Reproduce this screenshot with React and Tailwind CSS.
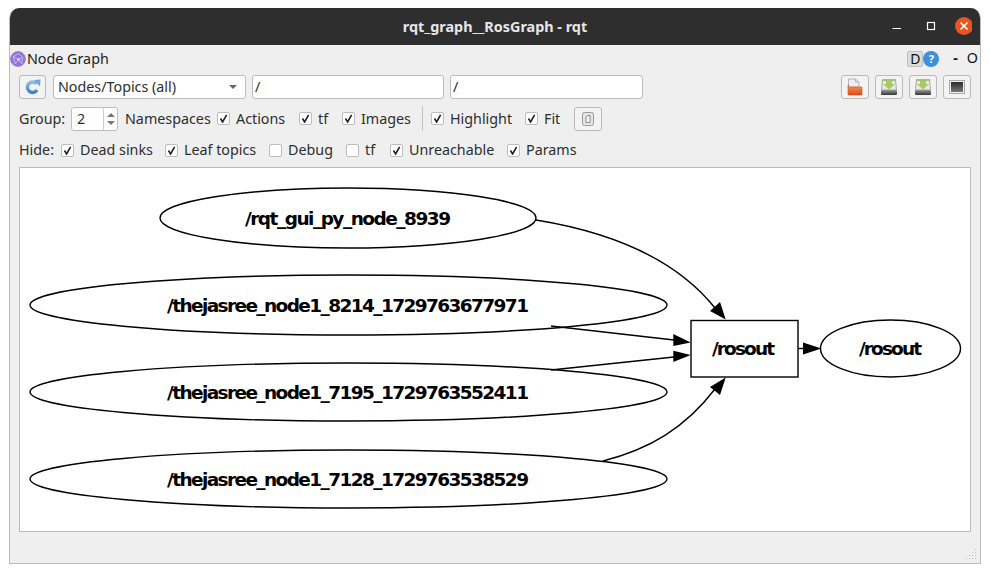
import React from "react";

const inputBox = "h-[24px] bg-white border border-[#bdbdbd] rounded-[3px]";
const toolBtn = "h-[24px] flex items-center justify-center bg-[#f3f3f3] border border-[#bababa] rounded-[3px]";

function Check({ label, checked = true, className = "" }) {
  return (
    <div className={`flex items-center shrink-0 ${className}`}>
      <span className="w-[13px] h-[13px] bg-white border border-[#bdbdbd] rounded-[2px] flex items-center justify-center shrink-0">
        {checked && (
          <svg width="9" height="9" viewBox="0 0 9 9">
            <path d="M1.5 4.5 L3.6 8 L7.6 0.8" fill="none" stroke="#222" strokeWidth="1.6" />
          </svg>
        )}
      </span>
      <span className="ml-[6px]">{label}</span>
    </div>
  );
}

function RefreshIcon() {
  return (
    <svg width="18" height="18" viewBox="0 0 18 18">
      <defs>
        <linearGradient id="refreshFill" x1="0" y1="0" x2="0" y2="1">
          <stop offset="0" stopColor="#8fbbe6" />
          <stop offset="1" stopColor="#3f83c9" />
        </linearGradient>
      </defs>
      <path d="M12.5 5.8 A5.2 5.2 0 1 0 13 12" fill="none" stroke="url(#refreshFill)" strokeWidth="3.4" />
      <path d="M10 2 L16.5 1.5 L16 8.5 Z" fill="#6fa5dc" />
    </svg>
  );
}

function FolderIcon() {
  return (
    <svg width="18" height="18" viewBox="0 0 18 18">
      <defs>
        <linearGradient id="folderFill" x1="0" y1="0" x2="0" y2="1">
          <stop offset="0" stopColor="#f79a68" />
          <stop offset="1" stopColor="#dd4a14" />
        </linearGradient>
      </defs>
      <path d="M2.5 1 H9.5 L13 4 V9 H2.5 Z" fill="#efefef" stroke="#b5b5b5" />
      <path d="M9.5 1 V4 H13" fill="#dddddd" stroke="#b5b5b5" />
      <path d="M2 7 H2.5 V9 H16 V17 H2 Z" fill="url(#folderFill)" stroke="#c9552a" strokeWidth="0.6" />
    </svg>
  );
}

function DriveIcon() {
  return (
    <svg width="18" height="18" viewBox="0 0 18 18">
      <defs>
        <linearGradient id="driveFill" x1="0" y1="0" x2="0" y2="1">
          <stop offset="0" stopColor="#9a9a9a" />
          <stop offset="1" stopColor="#333" />
        </linearGradient>
      </defs>
      <path d="M2.5 2 H15.5 L16.5 12 H1.5 Z" fill="#e9ebe3" stroke="#a8ab9f" />
      <rect x="1" y="12" width="16" height="5" rx="1" fill="url(#driveFill)" />
      <path d="M2 2 H16" stroke="#9dbb5c" strokeWidth="1.4" />
      <path d="M6 3 H12 V6 H15 L9 11.5 L3 6 H6 Z" fill="#a9c968" />
    </svg>
  );
}

function ScreenIcon() {
  return (
    <svg width="18" height="18" viewBox="0 0 18 18">
      <defs>
        <linearGradient id="screenFill" x1="0" y1="0" x2="0" y2="1">
          <stop offset="0" stopColor="#2b2b2b" />
          <stop offset="1" stopColor="#777" />
        </linearGradient>
      </defs>
      <rect x="1.5" y="2.5" width="15" height="13" fill="#efefef" stroke="#a9a9a9" />
      <rect x="3" y="4" width="12" height="10" fill="url(#screenFill)" />
    </svg>
  );
}

function FitIcon() {
  return (
    <svg width="16" height="16" viewBox="0 0 16 16">
      <rect x="2.5" y="1.5" width="11" height="13" rx="2" fill="#e4e4e4" stroke="#9a9a9a" />
      <path d="M6 6 L8 4.5 H10 V11.5 H6 Z" fill="#f7f7f7" stroke="#8a8a8a" />
    </svg>
  );
}

function GraphIcon() {
  return (
    <svg width="16" height="16" viewBox="0 0 15 15" className="shrink-0">
      <circle cx="7.5" cy="7.5" r="7" fill="#9272dc" stroke="#8d8d9c" strokeWidth="0.8" />
      <path d="M3 5 L8 2.5 L12 6 L8 8 L3 5 M8 8 L5 12 M8 8 L11 12 M3 5 L5 12 M12 6 L11 12" fill="none" stroke="#cfc0f2" strokeWidth="0.8" />
      <circle cx="8" cy="8" r="1.2" fill="#e6def9" />
    </svg>
  );
}

// graph is drawn in page coordinates, the viewBox is the canvas rect
function Graph() {
  const label = (x, y, len, text) => (
    <text x={x} y={y} textLength={len} fontSize="18.5" fontWeight="700" fill="#000" className="font-['DejaVu_Sans',sans-serif]">
      {text}
    </text>
  );
  return (
    <svg width="950" height="363" viewBox="20 168 950 363" className="block">
      <g fill="none" stroke="#000" strokeWidth="1.4">
        <ellipse cx="348" cy="218" rx="188" ry="30" />
        <ellipse cx="348.5" cy="305" rx="318.5" ry="30" />
        <ellipse cx="348.5" cy="392" rx="318.5" ry="29" />
        <ellipse cx="348.5" cy="479" rx="318.5" ry="29" />
        <rect x="691" y="320.5" width="107" height="56.5" />
        <ellipse cx="890.5" cy="348.5" rx="70" ry="28.5" />
        <path d="M536 220 C610 232 675 258 715 308" />
        <path d="M551 326 L674 340" />
        <path d="M551 370 L674 357" />
        <path d="M603 461 C650 449 685 428 715 389" />
        <path d="M798 348.5 H804" />
      </g>
      <g fill="#000">
        <path d="M725.7 319.5 L710 311 L720 302 Z" />
        <path d="M690.7 342.5 L673.3 334 L673.3 346 Z" />
        <path d="M690.7 355 L673.3 350.7 L673.3 362 Z" />
        <path d="M725.7 377.5 L710 387 L720 395 Z" />
        <path d="M821.5 348.5 L803 342.5 L803 354.5 Z" />
      </g>
      {label(245, 225, 206, "/rqt_gui_py_node_8939")}
      {label(167, 312, 362, "/thejasree_node1_8214_1729763677971")}
      {label(167, 399, 362, "/thejasree_node1_7195_1729763552411")}
      {label(167, 486, 362, "/thejasree_node1_7128_1729763538529")}
      {label(712, 355, 63, "/rosout")}
      {label(859, 355, 63, "/rosout")}
    </svg>
  );
}

export default function App() {
  return (
    <div className="w-[990px] h-[573px] bg-white pt-[8px] pl-[9px] overflow-hidden font-['Noto_Sans',sans-serif] text-[14.3px] text-[#2e2e2e]">
      <div className="w-[972px] h-[556px] flex flex-col bg-[#efefef] border-x border-b border-[#bcbcbc] rounded-t-[10px] overflow-hidden">
        {/* title bar */}
        <div className="h-[37px] shrink-0 bg-[#2f2e2e] flex items-center -mx-px relative">
          <div className="w-full text-center text-[14.4px] font-bold text-[#e6e6e6]">rqt_graph__RosGraph - rqt</div>
          <div className="absolute right-[9px] top-[8px] flex items-center">
            <svg width="80" height="20" viewBox="0 0 80 20">
              <path d="M0.5 12.5 H9" stroke="#fff" strokeWidth="1" />
              <rect x="35.5" y="6.5" width="7" height="7" fill="none" stroke="#fff" strokeWidth="1.2" />
              <circle cx="72" cy="10" r="9" fill="#e95420" />
              <path d="M68.5 6.5 L75.5 13.5 M75.5 6.5 L68.5 13.5" stroke="#fff" strokeWidth="1.6" />
            </svg>
          </div>
        </div>

        {/* dock title */}
        <div className="h-[23px] shrink-0 flex items-center justify-between pr-[2px] pt-[4px]">
          <div className="flex items-center text-[#222]">
            <GraphIcon />
            <span className="ml-[1px]">Node Graph</span>
          </div>
          <div className="flex items-center">
            <span className="w-[16px] h-[16px] bg-[#dcdcdc] border border-[#c0c0c0] rounded-[2px] flex items-center justify-center text-[14px] leading-none text-[#111]">D</span>
            <span className="w-[16px] h-[16px] rounded-full bg-[#3f8fdc] text-white text-[11px] font-bold leading-none flex items-center justify-center">?</span>
            <span className="ml-[14px] font-bold text-[#111] leading-none">-</span>
            <span className="ml-[9px] text-[#111] leading-none">O</span>
          </div>
        </div>

        {/* toolbar */}
        <div className="h-[24px] mt-[7px] shrink-0 flex items-center pl-[9px] pr-[9px]">
          <div className={`${toolBtn} w-[27px]`}><RefreshIcon /></div>
          <div className={`${inputBox} w-[193px] ml-[7px] bg-[#f3f3f3] flex items-center justify-between pl-[4px] pr-[8px]`}>
            <span>Nodes/Topics (all)</span>
            <span className="w-0 h-0 border-x-[4px] border-x-transparent border-t-[4px] border-t-[#666]" />
          </div>
          <div className={`${inputBox} w-[192px] ml-[6px] pl-[2px] flex items-center`}>/</div>
          <div className={`${inputBox} w-[193px] ml-[6px] pl-[2px] flex items-center`}>/</div>
          <div className="ml-auto flex items-center gap-[6px]">
            <div className={`${toolBtn} w-[28px]`}><FolderIcon /></div>
            <div className={`${toolBtn} w-[28px]`}><DriveIcon /></div>
            <div className={`${toolBtn} w-[28px]`}><DriveIcon /></div>
            <div className={`${toolBtn} w-[28px]`}><ScreenIcon /></div>
          </div>
        </div>

        {/* options */}
        <div className="h-[25px] mt-[7px] shrink-0 flex items-center pl-[9px]">
          <span className="w-[52px]">Group:</span>
          <div className={`${inputBox} w-[47px] flex items-center justify-between`}>
            <span className="pl-[5px]">2</span>
            <div className="w-[14px] h-full border-l border-[#d0d0d0] flex flex-col items-center justify-center gap-[4px]">
              <span className="w-0 h-0 border-x-[4px] border-x-transparent border-b-[4px] border-b-[#777]" />
              <span className="w-0 h-0 border-x-[4px] border-x-transparent border-t-[4px] border-t-[#777]" />
            </div>
          </div>
          <span className="ml-[7px] w-[92px]">Namespaces</span>
          <Check label="Actions" className="w-[82px]" />
          <Check label="tf" className="w-[43px]" />
          <Check label="Images" className="w-[80px]" />
          <span className="w-px h-[25px] bg-[#c4c4c4] mr-[8px]" />
          <Check label="Highlight" className="w-[94px]" />
          <Check label="Fit" className="w-[49px]" />
          <div className={`${toolBtn} w-[28px]`}><FitIcon /></div>
        </div>

        {/* hide filters */}
        <div className="h-[20px] mt-[9px] shrink-0 flex items-center pl-[9px]">
          <span className="w-[42px]">Hide:</span>
          <Check label="Dead sinks" className="w-[104px]" />
          <Check label="Leaf topics" className="w-[104px]" />
          <Check label="Debug" checked={false} className="w-[77px]" />
          <Check label="tf" checked={false} className="w-[44px]" />
          <Check label="Unreachable" className="w-[117px]" />
          <Check label="Params" />
        </div>

        {/* canvas */}
        <div className="h-[365px] w-[952px] mt-[7px] ml-[9px] shrink-0 bg-white border border-[#bcbcbc]">
          <Graph />
        </div>

        {/* size grip */}
        <div className="flex-1 flex justify-end items-end pr-[2px] pb-[2px]">
          <svg width="12" height="12" viewBox="0 0 12 12" fill="#bdbdbd">
            <rect x="9" y="0" width="1" height="1" />
            <rect x="6" y="3" width="1" height="1" /><rect x="9" y="3" width="1" height="1" />
            <rect x="3" y="6" width="1" height="1" /><rect x="6" y="6" width="1" height="1" /><rect x="9" y="6" width="1" height="1" />
            <rect x="0" y="9" width="1" height="1" /><rect x="3" y="9" width="1" height="1" /><rect x="6" y="9" width="1" height="1" /><rect x="9" y="9" width="1" height="1" />
          </svg>
        </div>
      </div>
    </div>
  );
}
